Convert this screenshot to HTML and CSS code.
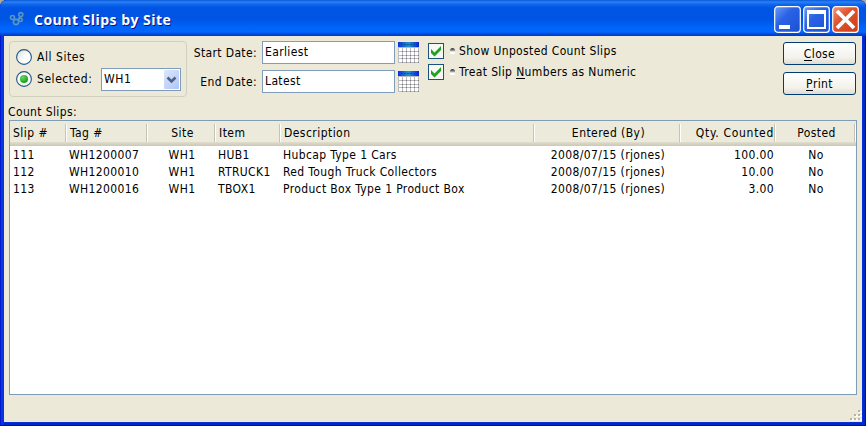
FILE: index.html
```html
<!DOCTYPE html>
<html lang="en">
<head>
<meta charset="utf-8">
<title>Count Slips by Site</title>
<link rel="stylesheet" href="styles.css">
</head>
<body>
<svg class="defs" width="0" height="0">
  <defs>
    <linearGradient id="calHead"><stop offset="0" stop-color="#0a2ee0"/><stop offset=".5" stop-color="#1c94cc"/><stop offset="1" stop-color="#0a20d8"/></linearGradient>
    <radialGradient id="greenDot" cx=".35" cy=".3" r=".8"><stop offset="0" stop-color="#62da5c"/><stop offset="1" stop-color="#15951a"/></radialGradient>
    <linearGradient id="radioFill" x1="0" y1="0" x2="1" y2="1"><stop offset="0" stop-color="#dcdcd7"/><stop offset=".6" stop-color="#fff"/></linearGradient>
    <linearGradient id="blueBtn" x1="0" y1="0" x2="1" y2="1"><stop offset="0" stop-color="#6c9cf8"/><stop offset=".4" stop-color="#2a62e6"/><stop offset="1" stop-color="#1c50d0"/></linearGradient>
    <linearGradient id="redBtn" x1="0" y1="0" x2="1" y2="1"><stop offset="0" stop-color="#f09a80"/><stop offset=".4" stop-color="#e2532f"/><stop offset="1" stop-color="#cc3c14"/></linearGradient>
    <symbol id="calendar" viewBox="0 0 21 21">
      <rect width="21" height="21" fill="#bcbcc0"/>
      <rect width="21" height="5" fill="url(#calHead)"/>
      <path d="M3 2.5h14" stroke="#12508c" stroke-dasharray="2 1"/>
      <path d="M1 6h3v3H1zM5 6h3v3H5zM9 6h3v3H9zM13 6h3v3h-3zM17 6h3v3h-3zM1 10h3v3H1zM5 10h3v3H5zM9 10h3v3H9zM13 10h3v3h-3zM17 10h3v3h-3zM1 14h3v2H1zM5 14h3v2H5zM9 14h3v2H9zM13 14h3v2h-3zM17 14h3v2h-3zM1 17h3v3H1zM5 17h3v3H5zM9 17h3v3H9zM13 17h3v3h-3zM17 17h3v3h-3z" fill="#fff"/>
      <path d="M4 9.5h17M4 13.5h17M4 16.5h17M4 20.5h17" stroke="#77777c" stroke-dasharray="1 3"/>
    </symbol>
    <symbol id="check" viewBox="0 0 16 16">
      <rect x=".5" y=".5" width="15" height="15" fill="#f7f7f4" stroke="#1c5180"/>
      <path d="M3 6v4l3.500 3.500L13 7V3L6.500 9.500z" fill="#21a121"/>
    </symbol>
  </defs>
</svg>
<div class="window">
  <header class="titlebar">
    <svg class="app-icon" width="16" height="16" viewBox="0 0 16 16" fill="none" stroke="#5795c4" stroke-width="1.6">
      <circle cx="3.5" cy="6.500" r="2"/><circle cx="11.800" cy="3.600" r="2"/><circle cx="7" cy="11" r="2.600"/><circle cx="11.500" cy="8.800" r="1.700"/><path d="M11 6L9 8.500M5 8l1 1"/>
    </svg>
    <h1 class="title">Count Slips by Site</h1>
    <div class="win-buttons">
      <svg class="wb" width="27" height="27" viewBox="0 0 27 27"><rect x=".7" y=".7" width="25.600" height="25.600" rx="3" fill="url(#blueBtn)" class="wb-edge"/><path d="M5 19h11v4H5z" fill="#fff"/></svg>
      <svg class="wb" width="27" height="27" viewBox="0 0 27 27"><rect x=".7" y=".7" width="25.600" height="25.600" rx="3" fill="url(#blueBtn)" class="wb-edge"/><path d="M4 4h19v19H4zM6 8v13h15V8z" fill="#fff" fill-rule="evenodd"/></svg>
      <svg class="wb" width="27" height="27" viewBox="0 0 27 27"><rect x=".7" y=".7" width="25.600" height="25.600" rx="3" fill="url(#redBtn)" class="wb-edge"/><path d="M5 5l17 17M22 5L5 22" stroke="#fff" stroke-width="3.800"/></svg>
    </div>
  </header>
  <main class="content">
    <div class="top">
      <div class="group">
        <div class="line">
          <svg width="16" height="16"><circle cx="8" cy="8" r="7.400" fill="url(#radioFill)" stroke="#21568a" stroke-width="1.100"/></svg>
          <span class="t all">All Sites</span>
        </div>
        <div class="line">
          <svg width="16" height="16"><circle cx="8" cy="8" r="7.400" fill="#f8f8f5" stroke="#21568a" stroke-width="1.100"/><circle cx="8" cy="8" r="4" fill="url(#greenDot)"/></svg>
          <span class="t sel">Selected:</span>
          <div class="combo"><span class="t">WH1</span><svg class="arrow" width="15" height="19"><path d="M3.500 7.500l4 4 4-4" fill="none" stroke="#4d6185" stroke-width="2.500"/></svg></div>
        </div>
      </div>
      <div class="dates">
        <span class="t lab start">Start Date:</span><div class="input"><span class="t early">Earliest</span></div><svg width="21" height="21"><use href="#calendar"/></svg>
        <span class="t lab end">End Date:</span><div class="input"><span class="t latest">Latest</span></div><svg width="21" height="21"><use href="#calendar"/></svg>
      </div>
      <div class="checks">
        <div class="check"><svg width="16" height="16"><use href="#check"/></svg><i class="bump"></i><span class="t show">Show Unposted Count Slips</span></div>
        <div class="check"><svg width="16" height="16"><use href="#check"/></svg><i class="bump"></i><span class="t treat">Treat Slip <u>N</u>umbers as Numeric</span></div>
      </div>
      <div class="buttons">
        <div class="btn"><span class="t"><u>C</u>lose</span></div>
        <div class="btn"><span class="t"><u>P</u>rint</span></div>
      </div>
    </div>
    <div class="caption"><span class="t">Count Slips:</span></div>
    <div class="table">
      <div class="row head">
        <span>Slip #</span><span>Tag #</span><span class="c">Site</span><span>Item</span><span>Description</span><span class="c">Entered (By)</span><span class="r">Qty. Counted</span><span class="c">Posted</span>
      </div>
      <div class="row"><span>111</span><span>WH1200007</span><span class="c">WH1</span><span>HUB1</span><span>Hubcap Type 1 Cars</span><span class="c">2008/07/15 (rjones)</span><span class="r">100.00</span><span class="c">No</span></div>
      <div class="row"><span>112</span><span>WH1200010</span><span class="c">WH1</span><span>RTRUCK1</span><span>Red Tough Truck Collectors</span><span class="c">2008/07/15 (rjones)</span><span class="r">10.00</span><span class="c">No</span></div>
      <div class="row"><span>113</span><span>WH1200016</span><span class="c">WH1</span><span>TBOX1</span><span>Product Box Type 1 Product Box</span><span class="c">2008/07/15 (rjones)</span><span class="r">3.00</span><span class="c">No</span></div>
    </div>
    <svg class="grip" width="12" height="12"><path d="M9 1h3v2H9zM5 5h3v2H5zM9 5h3v2H9zM1 9h3v2H1zM5 9h3v2H5zM9 9h3v2H9z" fill="#fff"/><path d="M8 0h2v2H8zM4 4h2v2H4zM8 4h2v2H8zM0 8h2v2H0zM4 8h2v2H4zM8 8h2v2H8z" fill="#b8b4a2"/></svg>
  </main>
</div>
</body>
</html>
```
FILE: styles.css
```css
* { box-sizing: border-box; }
body { margin: 0; background: #aca899; font: 12px/17px "DejaVu Sans Condensed", "DejaVu Sans", sans-serif; font-stretch: condensed; letter-spacing: .37px; color: #000; overflow: hidden; }
svg { display: block; flex: none; }
.defs { position: absolute; }
.window { width: 866px; height: 426px; display: flex; flex-direction: column; padding: 0 4px 4px; border-radius: 7px 7px 0 0; background: #0831d9; overflow: hidden; box-shadow: inset 1px 0 #0019cf, inset -1px -1px #00138c, inset 3px 0 #0838dd, inset -3px -3px #0028c4; }
.titlebar { height: 36px; flex: none; margin: 0 -4px; padding: 2px 7px 0 9px; display: flex; align-items: center; background: linear-gradient(#0a56d6 0, #2b83f8 2px, #1268ee 4px, #0054e3 8px, #0055e5 20px, #0064fa 27px, #0267ff 32px, #0048d8 34px, #0038c0 36px); }
.title { margin: 2px 0 0 9px; font: bold 14px/20px "Open Sans", sans-serif; letter-spacing: .48px; color: #fff; text-shadow: 1px 1px #0f1089; white-space: nowrap; }
.win-buttons { display: flex; gap: 2px; margin-left: auto; }
.wb-edge { stroke: #fff; stroke-width: 1.2; }
.content { flex: 1; background: #ece9d8; padding: 5px 5px 0; display: flex; flex-direction: column; }
.top { display: flex; height: 62px; align-items: flex-start; flex: none; }
.t, .row span { white-space: nowrap; }
.group { width: 178px; height: 56px; border: 1px solid #d0d0bf; border-radius: 4px; padding: 4px 5px 0 6px; }
.line { height: 22px; display: flex; align-items: center; gap: 5px; }
.line .t { letter-spacing: .55px; }
.sel { width: 56px; }
.combo { width: 80px; height: 23px; border: 1px solid #7f9db9; background: #fff; display: flex; align-items: center; justify-content: space-between; padding: 0 1px 0 2px; margin-left: 3px; }
.arrow { background: linear-gradient(135deg, #dce6fe, #b0c4f6); border-radius: 1px; }
.dates { width: 233px; display: grid; grid-template-columns: 70px 133px 21px; grid-template-rows: 23px 23px; gap: 6px 3px; align-items: center; margin-left: 2px; }
.lab { text-align: right; padding: 2px 2px 0 0; }
.input { height: 23px; border: 1px solid #7f9db9; background: #fff; padding: 2px 2px; }
.checks { width: 260px; padding-top: 2px; margin-left: 6px; }
.check { display: flex; height: 21px; align-items: flex-start; }
.bump { width: 5px; height: 6px; margin: 5px 4px 0 6px; background: linear-gradient(#44443e 1px, #bbb 3px, #fff 4px); border-radius: 3px 3px 1px 1px; }
.buttons { margin-left: auto; padding-top: 1px; display: flex; flex-direction: column; gap: 7px; }
.btn { width: 73px; height: 23px; border: 1px solid #003c74; border-radius: 3px; background: linear-gradient(#fff, #f3f2ec 70%, #dfdbcf); display: flex; justify-content: center; padding-top: 3px; margin-right: 1px; }
u { text-decoration: none; display: inline-block; height: 15px; border-bottom: 1px solid #000; }
.caption { height: 17px; flex: none; padding-top: 1px; margin-left: -1px; }
.table { width: 848px; height: 275px; border: 1px solid #7f9db9; background: #fff; }
.row { display: grid; grid-template-columns: 57px 81px 68px 65px 254px 146px 95px 80px; height: 17px; line-height: 19px; }
.row span { padding: 0 2px; }
.row span:first-child { padding-left: 3px; }
.row .c { text-align: center; }
.row .r { text-align: right; padding-right: 2px; }
.head { height: 25px; line-height: 25px; letter-spacing: .45px; background: linear-gradient(#ebeadb 21px, #e2decd 21px, #d6d2c2 23px, #cbc7b8); }
.head span { padding-left: 3px; background: linear-gradient(90deg, #c7c5b2 50%, #fff 50%) right 3px / 2px 18px no-repeat; }
.head .r { letter-spacing: .7px; }
.grip { align-self: flex-end; margin: 15px -5px 0 0; }
```
